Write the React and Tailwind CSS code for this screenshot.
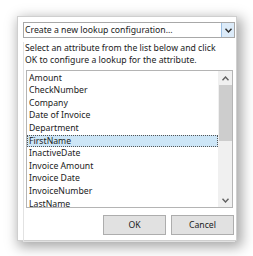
const items = [
  'Amount',
  'CheckNumber',
  'Company',
  'Date of Invoice',
  'Department',
  'FirstName',
  'InactiveDate',
  'Invoice Amount',
  'Invoice Date',
  'InvoiceNumber',
  'LastName',
]

const Chevron = ({ up }) => (
  <svg width="7" height="5" viewBox="0 0 7 5" fill="none" stroke="currentColor" strokeWidth="1.4">
    {up ? <polyline points="0.5 4.2 3.5 1 6.5 4.2" /> : <polyline points="0.5 0.8 3.5 4 6.5 0.8" />}
  </svg>
)

export default function App() {
  const font = { fontFamily: "'Noto Sans', 'Open Sans', sans-serif" }
  return (
    <div className="w-[253px] h-[256px] bg-white pt-[16px] pl-[17px] text-[8.7px] text-[#222]" style={font}>
      <div className="w-[220px] h-[225px] bg-white border border-[#cfcfcf] shadow-[3px_4px_12px_2px_rgba(0,0,0,0.35)] pl-[5px] pr-[1px] pt-[5px]">

        {/* combobox */}
        <div className="flex h-[16px] w-[212px] border border-[#a8a8a8] bg-white">
          <div className="flex-1 pl-[1px] leading-[14px] whitespace-nowrap">Create a new lookup configuration...</div>
          <div className="w-[13px] flex items-center justify-center bg-[#dcebf9] border-l border-[#9bbfe4] text-[#2b2b2b]">
            <Chevron />
          </div>
        </div>

        <div className="border-l border-b border-[#e2e2e2] h-[200px] -mb-px">
          {/* description */}
          <div className="mt-[4px] pl-[1px] leading-[12px] h-[24px] whitespace-nowrap">
            <p>Select an attribute from the list below and click</p>
            <p>OK to configure a lookup for the attribute.</p>
          </div>

          {/* listbox */}
          <div className="mt-[4px] ml-[2px] w-[207px] h-[138px] border border-[#b4b4b4] flex">
            <div className="flex-1 pt-[0.7px]">
              {items.map(it => (
                <div key={it}
                  className={it === 'FirstName'
                    ? 'h-[12.6px] leading-[11px] pl-[1px] bg-[#cde6f7] border border-dotted border-[#555]'
                    : 'h-[12.6px] leading-[12.6px] pl-[2px]'}>
                  {it}
                </div>
              ))}
            </div>
            <div className="w-[14px] bg-[#f0f0f0] flex flex-col items-center">
              <div className="h-[14px] flex items-center justify-center text-[#606060]"><Chevron up /></div>
              <div className="w-[13px] h-[56px] bg-[#cdcdcd]" />
              <div className="flex-1" />
              <div className="h-[14px] flex items-center justify-center text-[#606060]"><Chevron /></div>
            </div>
          </div>

          {/* buttons */}
          <div className="flex justify-end gap-[5px] mt-[7px] pr-[1px]">
            <button className="w-[63px] h-[20px] bg-[#e1e1e1] border border-[#adadad] leading-[18px]" style={font}>OK</button>
            <button className="w-[63px] h-[20px] bg-[#e1e1e1] border border-[#adadad] leading-[18px]" style={font}>Cancel</button>
          </div>
        </div>
      </div>
    </div>
  )
}
